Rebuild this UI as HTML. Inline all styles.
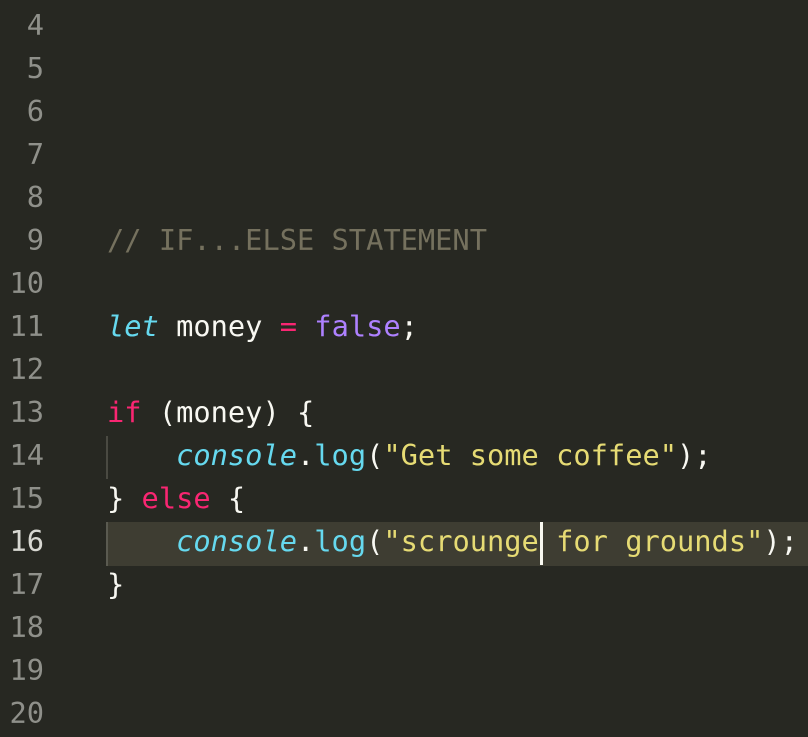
<html><head><style>
body{margin:0;background:#272822;width:808px;height:736px;overflow:hidden;font-family:"DejaVu Sans Mono","Liberation Mono",monospace;font-size:28.7px;}
.l{position:absolute;left:0;height:43px;line-height:43px;width:808px;white-space:pre;color:#f8f8f2}
.n{position:absolute;left:0;top:-2px;width:44px;text-align:right;color:#8f908a}
.c{position:absolute;left:107px;top:-2px}
.cm{color:#75715e}.k{color:#f92672}.i{color:#66d9ef;font-style:italic}.f{color:#66d9ef}.s{color:#e6db74}.p{color:#ae81ff}
</style></head><body>
<div style="position:absolute;left:106px;top:522px;width:702px;height:44px;background:#3e3d32"></div>
<div style="position:absolute;left:106px;top:436px;width:2px;height:43px;background:#4a4a42"></div>
<div style="position:absolute;left:106px;top:522px;width:2px;height:44px;background:#5a5a50"></div>
<div style="position:absolute;left:540px;top:522px;width:3px;height:43px;background:#f8f8f0"></div>
<div class="l" style="top:6px"><span class="n">4</span></div>
<div class="l" style="top:49px"><span class="n">5</span></div>
<div class="l" style="top:92px"><span class="n">6</span></div>
<div class="l" style="top:135px"><span class="n">7</span></div>
<div class="l" style="top:178px"><span class="n">8</span></div>
<div class="l" style="top:221px"><span class="n">9</span><span class="c cm">// IF...ELSE STATEMENT</span></div>
<div class="l" style="top:264px"><span class="n">10</span></div>
<div class="l" style="top:307px"><span class="n">11</span><span class="c"><span class="i">let</span> money <span class="k">=</span> <span class="p">false</span>;</span></div>
<div class="l" style="top:350px"><span class="n">12</span></div>
<div class="l" style="top:393px"><span class="n">13</span><span class="c"><span class="k">if</span> (money) {</span></div>
<div class="l" style="top:436px"><span class="n">14</span><span class="c">    <span class="i">console</span>.<span class="f">log</span>(<span class="s">"Get some coffee"</span>);</span></div>
<div class="l" style="top:479px"><span class="n">15</span><span class="c">} <span class="k">else</span> {</span></div>
<div class="l" style="top:522px"><span class="n" style="color:#d8d8d2">16</span><span class="c">    <span class="i">console</span>.<span class="f">log</span>(<span class="s">"scrounge for grounds"</span>);</span></div>
<div class="l" style="top:565px"><span class="n">17</span><span class="c">}</span></div>
<div class="l" style="top:608px"><span class="n">18</span></div>
<div class="l" style="top:651px"><span class="n">19</span></div>
<div class="l" style="top:694px"><span class="n">20</span></div>
</body></html>
